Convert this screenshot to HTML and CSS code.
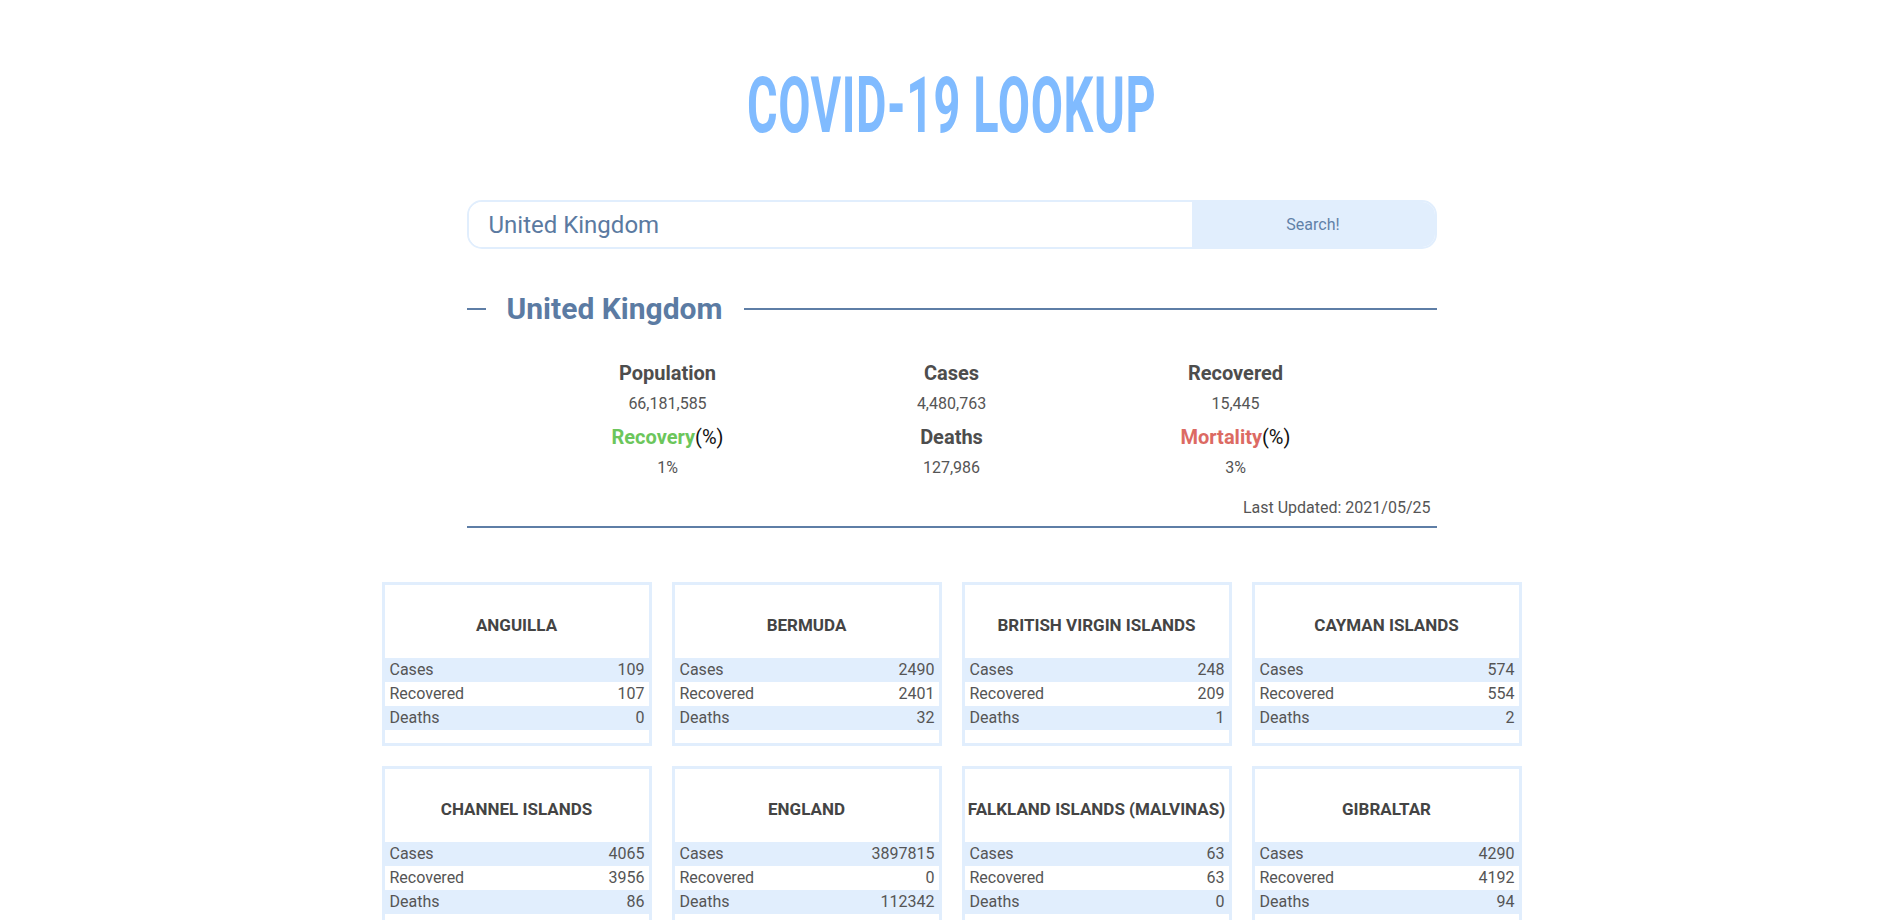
FILE: index.html
```html
<!DOCTYPE html>
<html lang="en">
<head>
<meta charset="utf-8">
<title>COVID-19 Lookup</title>
<link rel="stylesheet" href="styles.css">
</head>
<body>
<header class="masthead">
  <h1 class="brand"><span class="brand-text">COVID-19 LOOKUP</span></h1>
</header>

<main class="page">
  <form class="search" onsubmit="return false;">
    <input class="search-input" type="text" value="United Kingdom" autofocus>
    <button class="search-btn" type="submit">Search!</button>
  </form>

  <section class="country">
    <div class="country-head">
      <span class="dash"></span>
      <h2 class="country-name">United Kingdom</h2>
      <span class="rule"></span>
    </div>

    <div class="stats">
      <div class="stat">
        <div class="stat-label">Population</div>
        <div class="stat-value">66,181,585</div>
      </div>
      <div class="stat">
        <div class="stat-label">Cases</div>
        <div class="stat-value">4,480,763</div>
      </div>
      <div class="stat">
        <div class="stat-label">Recovered</div>
        <div class="stat-value">15,445</div>
      </div>
      <div class="stat">
        <div class="stat-label"><span class="good">Recovery</span><span class="pct">(%)</span></div>
        <div class="stat-value">1%</div>
      </div>
      <div class="stat">
        <div class="stat-label">Deaths</div>
        <div class="stat-value">127,986</div>
      </div>
      <div class="stat">
        <div class="stat-label"><span class="bad">Mortality</span><span class="pct">(%)</span></div>
        <div class="stat-value">3%</div>
      </div>
    </div>

    <div class="updated">Last Updated: 2021/05/25</div>
  </section>
</main>

<section class="regions">
  <article class="card">
    <h3 class="card-title">ANGUILLA</h3>
    <div class="row shade"><span>Cases</span><span>109</span></div>
    <div class="row"><span>Recovered</span><span>107</span></div>
    <div class="row shade"><span>Deaths</span><span>0</span></div>
  </article>
  <article class="card">
    <h3 class="card-title">BERMUDA</h3>
    <div class="row shade"><span>Cases</span><span>2490</span></div>
    <div class="row"><span>Recovered</span><span>2401</span></div>
    <div class="row shade"><span>Deaths</span><span>32</span></div>
  </article>
  <article class="card">
    <h3 class="card-title">BRITISH VIRGIN ISLANDS</h3>
    <div class="row shade"><span>Cases</span><span>248</span></div>
    <div class="row"><span>Recovered</span><span>209</span></div>
    <div class="row shade"><span>Deaths</span><span>1</span></div>
  </article>
  <article class="card">
    <h3 class="card-title">CAYMAN ISLANDS</h3>
    <div class="row shade"><span>Cases</span><span>574</span></div>
    <div class="row"><span>Recovered</span><span>554</span></div>
    <div class="row shade"><span>Deaths</span><span>2</span></div>
  </article>
  <article class="card">
    <h3 class="card-title">CHANNEL ISLANDS</h3>
    <div class="row shade"><span>Cases</span><span>4065</span></div>
    <div class="row"><span>Recovered</span><span>3956</span></div>
    <div class="row shade"><span>Deaths</span><span>86</span></div>
  </article>
  <article class="card">
    <h3 class="card-title">ENGLAND</h3>
    <div class="row shade"><span>Cases</span><span>3897815</span></div>
    <div class="row"><span>Recovered</span><span>0</span></div>
    <div class="row shade"><span>Deaths</span><span>112342</span></div>
  </article>
  <article class="card">
    <h3 class="card-title">FALKLAND ISLANDS (MALVINAS)</h3>
    <div class="row shade"><span>Cases</span><span>63</span></div>
    <div class="row"><span>Recovered</span><span>63</span></div>
    <div class="row shade"><span>Deaths</span><span>0</span></div>
  </article>
  <article class="card">
    <h3 class="card-title">GIBRALTAR</h3>
    <div class="row shade"><span>Cases</span><span>4290</span></div>
    <div class="row"><span>Recovered</span><span>4192</span></div>
    <div class="row shade"><span>Deaths</span><span>94</span></div>
  </article>
</section>
</body>
</html>
```
FILE: styles.css
```css
* { box-sizing: border-box; }

html, body {
  margin: 0;
  padding: 0;
  background: #ffffff;
}

body {
  font-family: Roboto, "Liberation Sans", Arial, sans-serif;
  color: #4a4a4a;
}

.masthead {
  display: flex;
  justify-content: center;
  padding-top: 68px;
}

.brand {
  margin: 0;
  font-family: Roboto, "Liberation Sans", sans-serif;
  font-weight: 700;
  font-size: 77px;
  line-height: 77px;
  color: #80bbff;
  letter-spacing: 1px;
}

.brand-text {
  display: inline-block;
  transform: scaleX(0.608);
  transform-origin: center;
  white-space: nowrap;
}

.page {
  width: 970px;
  margin: 0 auto;
}

.search {
  margin-top: 55px;
  display: flex;
  height: 49px;
  border: 2px solid #e1eefd;
  border-radius: 15px;
  overflow: hidden;
}

.search-input {
  flex: 1;
  border: 0;
  outline: none;
  padding: 0 0 0 20px;
  font-family: Roboto, "Liberation Sans", sans-serif;
  font-size: 24px;
  color: #5b7aa1;
  caret-color: #5b7aa1;
  background: #fff;
}

.search-btn {
  width: 243px;
  border: 0;
  background: #e1eefd;
  font-family: Roboto, "Liberation Sans", sans-serif;
  font-size: 16px;
  color: #6181a8;
  cursor: pointer;
}

.country-head {
  margin-top: 42px;
  display: flex;
  align-items: center;
  height: 36px;
}

.dash {
  width: 19px;
  height: 2px;
  background: #5e7ea6;
}

.rule {
  flex: 1;
  height: 2px;
  background: #5e7ea6;
}

.country-name {
  margin: 0 21px 0 21px;
  font-size: 30px;
  line-height: 36px;
  font-weight: 700;
  color: #5b7ba3;
}

.stats {
  width: 852px;
  margin: 34px auto 0;
  display: grid;
  grid-template-columns: repeat(3, 1fr);
  row-gap: 9px;
  text-align: center;
}

.stat-label {
  font-size: 20px;
  line-height: 24px;
  font-weight: 700;
  color: #4d4d4d;
  margin-bottom: 7px;
}

.stat-value {
  font-size: 16px;
  line-height: 24px;
  color: #555;
}

.good { color: #6cc65c; }
.bad { color: #dc6a63; }
.pct { font-weight: 400; color: #111; }

.updated {
  margin-top: 16px;
  padding: 0 6px 6px 0;
  text-align: right;
  font-size: 16px;
  line-height: 24px;
  color: #555;
  border-bottom: 2px solid #5e7ea6;
}

.regions {
  width: 1140px;
  margin: 54px auto 40px;
  display: grid;
  grid-template-columns: repeat(4, 270px);
  gap: 20px;
}

.card {
  border: 3px solid #e1eefd;
  padding-bottom: 13px;
}

.card-title {
  margin: 0;
  padding: 30px 2px 23px;
  height: 73px;
  font-size: 17px;
  line-height: 20px;
  font-weight: 700;
  text-align: center;
  color: #444;
  white-space: nowrap;
}

.row {
  display: flex;
  justify-content: space-between;
  padding: 0 4px 0 5px;
  font-size: 16px;
  line-height: 24px;
  color: #555;
}

.row.shade { background: #e1eefd; }
```
